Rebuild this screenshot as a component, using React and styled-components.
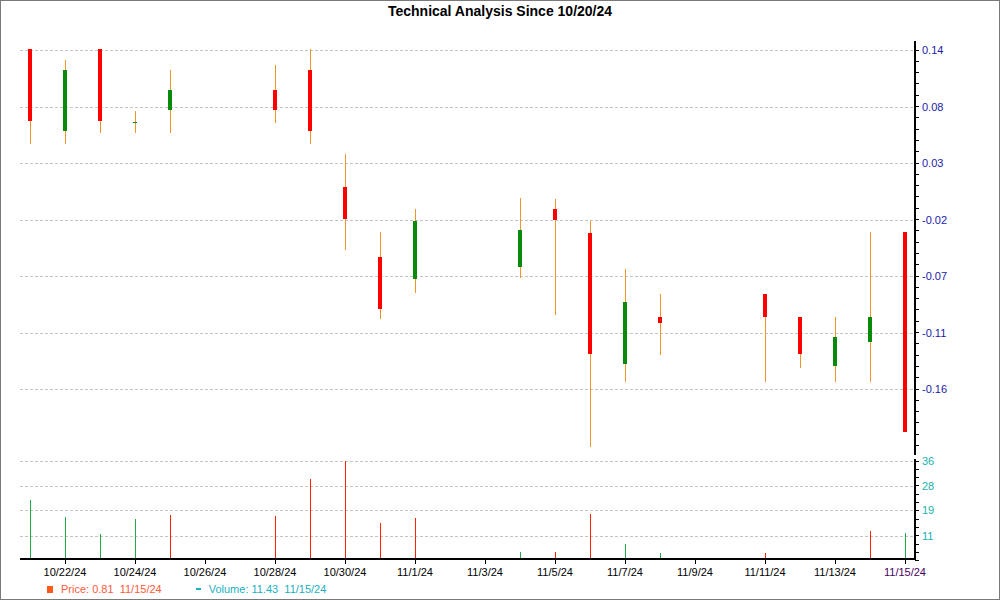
import React from "react";
import styled, { createGlobalStyle } from "styled-components";

const Global = createGlobalStyle`
  body { margin: 0; font-family: "Liberation Sans", Arial, sans-serif; background: #fff; }
`;

const Frame = styled.div`
  width: 1000px;
  height: 600px;
  box-sizing: border-box;
  border: 1px solid #7a7a7a;
  display: flex;
  flex-direction: column;
  overflow: hidden;
`;

const Title = styled.div`
  height: 21px;
  line-height: 21px;
  text-align: center;
  font-size: 14px;
  font-weight: bold;
  color: #000;
`;

const Legend = styled.div`
  display: flex;
  align-items: center;
  gap: 14px;
  padding-left: 46px;
  height: 20px;
  font-size: 11px;
`;

const Item = styled.span`
  color: ${(p) => p.color};
  display: flex;
  align-items: center;
  gap: 8px;
`;

const Swatch = styled.span`
  display: inline-block;
  width: ${(p) => (p.line ? "5px" : "6px")};
  height: ${(p) => (p.line ? "1.5px" : "7px")};
  background: ${(p) => p.color};
`;

const px = (d) => 30.5 + 35 * d;
// day offset, hi, lo, bodyTop, bodyBot, up
const candles = [
  [0, 48, 143, 48, 120, 0], [1, 59, 143, 69, 130, 1], [2, 48, 132, 48, 120, 0],
  [3, 110, 132, 121, 122, 1], [4, 69, 132, 89, 109, 1], [7, 64, 122, 89, 109, 0],
  [8, 48, 143, 69, 130, 0], [9, 153, 249, 186, 218, 0], [10, 231, 318, 256, 308, 0],
  [11, 208, 292, 220, 278, 1], [14, 197, 277, 229, 266, 1], [15, 198, 314, 208, 219, 0],
  [16, 220, 446, 232, 353, 0], [17, 268, 381, 301, 363, 1], [18, 293, 354, 316, 322, 0],
  [21, 293, 381, 293, 316, 0], [22, 316, 367, 316, 353, 0], [23, 316, 381, 336, 365, 1],
  [24, 231, 381, 316, 341, 1], [25, 231, 431, 231, 431, 0],
];
const vols = [
  [0, 499, 1], [1, 516, 1], [2, 533, 1], [3, 518, 1], [4, 514, 0], [7, 515, 0],
  [8, 478, 0], [9, 460, 0], [10, 522, 0], [11, 517, 0], [14, 551, 1], [15, 551, 0],
  [16, 513, 0], [17, 543, 1], [18, 552, 1], [21, 552, 0], [24, 530, 0], [25, 532, 1],
];
const priceTicks = [[49, "0.14"], [106, "0.08"], [162, "0.03"], [219, "-0.02"], [275, "-0.07"], [332, "-0.11"], [388, "-0.16"]];
const volTicks = [[460, "36"], [485, "28"], [509, "19"], [535, "11"]];
const dates = ["10/22/24", "10/24/24", "10/26/24", "10/28/24", "10/30/24", "11/1/24", "11/3/24", "11/5/24", "11/7/24", "11/9/24", "11/11/24", "11/13/24", "11/15/24"];
const font = "Liberation Sans, Arial, sans-serif";

const Chart = () => (
  <svg width="998" height="557" viewBox="1 21 998 557" style={{ display: "block" }} shapeRendering="crispEdges">
    {[...priceTicks, ...volTicks].map(([y]) => (
      <line key={y} x1="20" x2="914" y1={y + 0.5} y2={y + 0.5} stroke="#c4c4c4" strokeDasharray="3 2" strokeWidth="1" />
    ))}
    {candles.map(([d, hi, lo, t, b, up]) => (
      <g key={d}>
        <line x1={px(d)} x2={px(d)} y1={hi} y2={lo} stroke="#f0962a" strokeWidth="1" />
        <rect x={px(d) - 2.5} y={t} width="4" height={Math.max(b - t, 1)} fill={up ? "#0a8a0a" : "#ff0000"} />
      </g>
    ))}
    {vols.map(([d, y, up]) => (
      <line key={d} x1={px(d)} x2={px(d)} y1={y} y2="558" stroke={up ? "#22aa44" : "#ff2200"} strokeWidth="1" />
    ))}
    <line x1="20" x2="916" y1="558" y2="558" stroke="#000" strokeWidth="2" />
    <line x1="915" x2="915" y1="40" y2="454" stroke="#000" strokeWidth="2" />
    <line x1="915" x2="915" y1="458" y2="558" stroke="#000" strokeWidth="2" />
    {Array.from({ length: 37 }, (_, i) => 49 + i * 11.3).filter((y) => y < 454).map((y) => (
      <line key={"p" + y} x1="915" x2="919" y1={y} y2={y} stroke="#000" />
    ))}
    {Array.from({ length: 13 }, (_, i) => 460 + i * 8.3).map((y) => (
      <line key={"v" + y} x1="915" x2="919" y1={y} y2={y} stroke="#000" />
    ))}
    {priceTicks.map(([y, t]) => (
      <text key={t} x="922" y={y + 4} fontSize="11" fill="#1a1aaa" fontFamily={font} shapeRendering="auto">{t}</text>
    ))}
    {volTicks.map(([y, t]) => (
      <text key={t} x="922" y={y + 4} fontSize="11" fill="#19b0b0" fontFamily={font}>{t}</text>
    ))}
    {dates.map((t, i) => (
      <g key={t}>
        <line x1={65.5 + 70 * i} x2={65.5 + 70 * i} y1="558" y2="563" stroke="#000" />
        <text x={65 + 70 * i} y="575" fontSize="11" textAnchor="middle" fill={i === 12 ? "#4a0060" : "#000"} fontFamily={font}>{t}</text>
      </g>
    ))}
  </svg>
);

export default function App() {
  return (
    <Frame>
      <Global />
      <Title>Technical Analysis Since 10/20/24</Title>
      <Chart />
      <Legend>
        <Item color="#ff5a3a"><Swatch color="#ff5a1a" />Price: 0.81&nbsp; 11/15/24</Item>
        <Item color="#19b0c0" style={{ marginLeft: 20 }}><Swatch line color="#19b0c0" />Volume: 11.43&nbsp; 11/15/24</Item>
      </Legend>
    </Frame>
  );
}
